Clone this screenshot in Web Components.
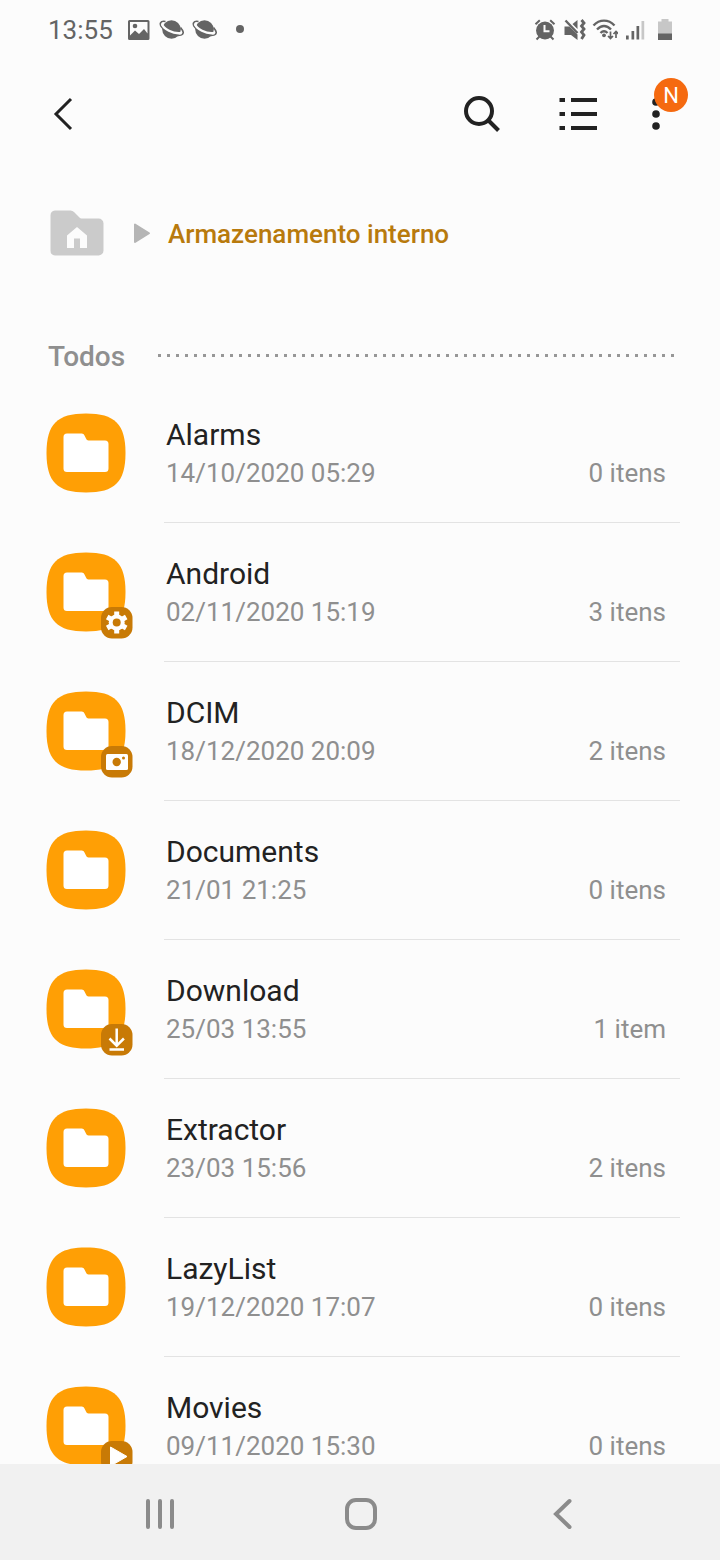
<!DOCTYPE html>
<html lang="pt-BR">
<head>
<meta charset="utf-8">
<meta name="viewport" content="width=device-width, initial-scale=1">
<title>Meus Arquivos</title>
<style>
  html, body { margin: 0; height: 100%; }
  body { background: #fcfcfc; color: #222; font-family: Roboto, "Noto Sans", sans-serif; }
</style>
</head>
<body>
<file-app></file-app>
<script>
const define = (name, html, setup) => {
  const template = document.createElement('template');
  template.innerHTML = html;
  customElements.define(name, class extends HTMLElement {
    connectedCallback() {
      if (this.shadowRoot) return;
      this.attachShadow({ mode: 'open' }).append(template.content.cloneNode(true));
      if (setup) setup(this, this.shadowRoot);
    }
  });
};

define('planet-icon', `
  <style>:host { display: block; } svg { display: block; fill: currentColor; }</style>
  <svg width="25" height="26" viewBox="0 0 25 26"><circle cx="12.500" cy="12.500" r="9.300"/><path d="M6.500 4.500C1 3.500 0 7 3 10.500c4.500 5.500 13.500 9 19 7.500 3.500-1 2.500-4-.5-7.500" fill="none" stroke="currentColor" stroke-width="1.600"/><path d="M3 7c1 4.500 11 10.500 19.500 9" fill="none" stroke="#fcfcfc" stroke-width="2.400"/></svg>
`);

define('status-bar', `
  <style>
    :host { display: flex; justify-content: space-between; align-items: center; height: 60px; padding: 0 42px 0 48px; color: #646464; flex: none; }
    .left, .right { display: flex; align-items: center; }
    .left { gap: 8px; }
    .right { gap: 4px; }
    time { font-size: 26px; line-height: 32px; margin-right: 5px; }
    svg { display: block; fill: currentColor; }
  </style>
  <div class="left">
    <time>13:55</time>
    <svg width="25" height="26" viewBox="0 0 25 26"><path fill-rule="evenodd" d="M3.500 3h18.500a1.500 1.500 0 0 1 1.500 1.500v17a1.500 1.500 0 0 1-1.500 1.500h-18.500a1.500 1.500 0 0 1-1.500-1.500v-17a1.500 1.500 0 0 1 1.500-1.500zM4 5v13.500l5-5 4 3.500 5-5 3.500 4.500v-11.500z"/><circle cx="9" cy="9" r="2.300"/></svg>
    <planet-icon></planet-icon>
    <planet-icon></planet-icon>
    <svg width="25" height="26" viewBox="0 0 25 26"><circle cx="15" cy="12" r="4"/></svg>
  </div>
  <div class="right">
    <svg width="26" height="26" viewBox="0 0 26 26"><circle cx="13" cy="13.500" r="9"/><path d="M3.500 7.200l4.300-4M22.500 7.200l-4.300-4M7.500 19.500l-3 3M18.500 19.500l3 3" stroke="currentColor" stroke-width="2"/><path d="M12.500 8v6.300h5" fill="none" stroke="#fcfcfc" stroke-width="2"/></svg>
    <svg width="26" height="26" viewBox="0 0 26 26"><path d="M2.500 9.500h5l8 8v5.500l-6.500-5h-6.500zM10.500 7l5-4v9z"/><path d="M3.500 3.500l12 12.500" stroke="currentColor" stroke-width="2.400"/><path d="M19.500 3l2.500 3-2.500 3 2.500 3-2.500 3 2.500 3-2.500 4" fill="none" stroke="currentColor" stroke-width="2.800"/></svg>
    <svg width="26" height="26" viewBox="0 0 26 26"><g fill="none" stroke="currentColor" stroke-width="2.400"><path d="M1.500 8.500c6-6.500 15-6.500 21 0M5 12.500c4.500-4.700 9.500-4.700 14 0M8.500 16c2.500-2.500 4.500-2.500 7 0"/><path d="M18.500 14.500v7M16 19l2.500 2.500 2.500-2.500M24 21v-6.500M21.500 17l2.500-2.500 2.500 2.500" stroke-width="1.700"/></g><circle cx="12" cy="18.300" r="1.900"/></svg>
    <svg width="26" height="26" viewBox="0 0 26 26"><path d="M4 18.500h2.700v4h-2.700zM9.500 14h2.700v8.500h-2.700zM14.500 9h2.700v13.500h-2.700z"/><path d="M19.500 4h2.700v18.500h-2.700z" opacity=".35"/></svg>
    <svg width="26" height="26" viewBox="0 0 26 26"><path d="M9.500 2h7v2.500h3.500v12.500h-14v-12.500h3.500z" opacity=".35"/><path d="M6 16.500h14v6.500h-14z"/></svg>
  </div>
`);

define('app-toolbar', `
  <style>
    :host { display: flex; align-items: center; height: 108px; padding: 0 34px 0 33px; color: #222; flex: none; }
    button { display: grid; place-items: center; position: relative; width: 96px; height: 60px; padding: 0; border: 0; background: none; color: inherit; font: inherit; }
    .back { width: 60px; margin-right: auto; }
    .more { width: 60px; }
    .badge { position: absolute; right: -2px; top: -6px; width: 34px; height: 34px; border-radius: 50%; background: #f56a10; color: #fff; font-size: 22px; line-height: 36px; text-align: center; }
    svg { display: block; fill: none; stroke: currentColor; }
  </style>
  <button class="back" aria-label="Voltar"><svg width="40" height="40" viewBox="0 0 40 40" stroke-width="3"><path d="M28 5L13 20l15 15"/></svg></button>
  <button aria-label="Pesquisar"><svg width="40" height="40" viewBox="0 0 40 40" stroke-width="4"><circle cx="17" cy="17" r="13"/><path d="M26.500 26.500l10 10"/></svg></button>
  <button aria-label="Exibir em lista"><svg width="40" height="40" viewBox="0 0 40 40" stroke-width="4"><path d="M1.500 6h5.500M13 6h26M1.500 20h5.500M13 20h26M1.500 34h5.500M13 34h26"/></svg></button>
  <button class="more" aria-label="Mais opções"><svg width="40" height="40" viewBox="0 0 40 40" style="fill:currentColor;stroke:none"><circle cx="20" cy="8" r="3.800"/><circle cx="20" cy="20" r="3.800"/><circle cx="20" cy="32" r="3.800"/></svg><span class="badge">N</span></button>
`);

define('path-trail', `
  <style>
    :host { display: block; flex: none; padding: 36px 40px 0 50px; }
    nav { display: flex; align-items: center; height: 60px; }
    a { color: #b87a0d; text-decoration: none; font-size: 26px; line-height: 36px; font-weight: 500; }
    svg { display: block; }
    .arrow { margin: 0 16px 0 30px; }
  </style>
  <nav aria-label="Caminho">
    <a href="#inicio" aria-label="Início"><svg width="54" height="48" viewBox="0 0 54 48"><path fill="#cbcbcb" d="M5 .5h15.500a5 5 0 0 1 3.500 1.500l5.500 5.500a3 3 0 0 0 2 1h17a5 5 0 0 1 5 5v27a5 5 0 0 1-5 5h-43.500a5 5 0 0 1-4.500-5v-35a5 5 0 0 1 4.500-5z"/><path fill="#fcfcfc" d="M27 17l10 8.500v12.500h-7v-9.500h-6v9.500h-7v-12.500z"/></svg></a>
    <svg class="arrow" width="18" height="22" viewBox="0 0 18 22"><path fill="#b5b5b5" stroke="#b5b5b5" stroke-width="2" stroke-linejoin="round" d="M1 1.500v17.500l14-8.750z"/></svg>
    <a href="#interno"><slot></slot></a>
  </nav>
`);

define('section-title', `
  <style>
    :host { display: flex; align-items: center; gap: 33px; padding: 75px 45px 9px 48px; }
    h2 { margin: 0; font-size: 28px; line-height: 36px; font-weight: 500; color: #8f8f8f; }
    i { flex: 1; height: 3px; margin-bottom: 4px; background: repeating-linear-gradient(90deg, #979797 0 3px, transparent 3px 9px); }
  </style>
  <h2><slot></slot></h2><i></i>
`);

const squircle = (x, y, s) => {
  const h = s / 2, k = s * 0.135;
  return `M${x + h} ${y}C${x + s - k} ${y} ${x + s} ${y + k} ${x + s} ${y + h}S${x + s - k} ${y + s} ${x + h} ${y + s}S${x} ${y + s - k} ${x} ${y + h}S${x + k} ${y} ${x + h} ${y}z`;
};
const badgeArt = {
  gear: '<g transform="translate(76.700 78.500)"><circle r="8" fill="#fff"/><path d="M0-11v22M-9.500-5.500l19 11M-9.500 5.500l19-11" stroke="#fff" stroke-width="5"/><circle r="4" fill="#c87a06"/></g>',
  camera: '<rect x="66" y="71" width="22" height="16" rx="1.500" fill="#fff"/><circle cx="76.700" cy="79" r="4.200" fill="#c87a06"/><circle cx="83.500" cy="75" r="1.500" fill="#c87a06"/>',
  download: '<path d="M76.700 67.500v17.500M69.500 77.500l7.200 7.200 7.200-7.200M69.500 88.500h14.500" fill="none" stroke="#fff" stroke-width="2.500"/>',
  play: '<path d="M70.500 69l16.500 9.500-16.500 9.500z" fill="#fff" stroke="#fff" stroke-linejoin="round"/>'
};

define('folder-icon', `
  <style>
    :host { display: block; width: 96px; height: 96px; }
    svg { display: block; }
  </style>
  <svg width="96" height="96" viewBox="0 0 96 96">
    <path fill="#ff9f05" d="${squircle(6.5, 8.5, 79)}"/>
    <path fill="#fff" d="M27 28.500h14.500a3 3 0 0 1 3 2l1.500 3a3 3 0 0 0 2.500 2h16.500a3.500 3.500 0 0 1 3.500 3.500v24.500a3.500 3.500 0 0 1-3.500 3.500h-38a3.500 3.500 0 0 1-3.500-3.500v-31.500a3.500 3.500 0 0 1 3.500-3.500z"/>
    <g></g>
  </svg>
`, (host, root) => {
  const kind = host.getAttribute('badge');
  if (kind) root.querySelector('g').innerHTML = `<rect x="61" y="63" width="31.500" height="31.500" rx="11" fill="#c87a06"/>` + badgeArt[kind];
});

define('folder-row', `
  <style>
    :host { display: block; }
    a { display: flex; height: 139px; padding: 0 40px; color: #222; text-decoration: none; }
    folder-icon { margin: 21px 28px 0 0; flex: none; }
    .body { flex: 1; box-sizing: border-box; display: grid; grid-template-columns: 1fr auto; grid-template-rows: 38px 38px; padding: 32px 14px 0 2px; border-bottom: 1px solid #e3e3e3; line-height: 38px; }
    .name { grid-column: 1 / 3; font-size: 30px; }
    .meta { font-size: 26px; color: #8f8f8f; }
  </style>
  <a href="#pasta">
    <folder-icon></folder-icon>
    <div class="body"><span class="name"><slot></slot></span><span class="meta"><slot name="date"></slot></span><span class="meta"><slot name="count"></slot></span></div>
  </a>
`, (host, root) => {
  const kind = host.getAttribute('badge');
  if (kind) {
    const icon = document.createElement('folder-icon');
    icon.setAttribute('badge', kind);
    root.querySelector('folder-icon').replaceWith(icon);
  }
});

define('system-nav', `
  <style>
    :host { display: grid; grid-template-columns: repeat(3, 1fr); height: 96px; padding: 4px 57px 0 59px; box-sizing: border-box; background: #f1f1f1; color: #8b8b8b; flex: none; }
    button { display: grid; place-items: center; padding: 0; border: 0; background: none; color: inherit; }
    svg { display: block; fill: none; stroke: currentColor; stroke-width: 4; }
  </style>
  <button aria-label="Recentes"><svg width="40" height="40" viewBox="0 0 40 40" stroke-linecap="round"><path d="M8 7v26M20 7v26M32 7v26"/></svg></button>
  <button aria-label="Início"><svg width="40" height="40" viewBox="0 0 40 40"><rect x="6" y="6" width="28" height="28" rx="9"/></svg></button>
  <button aria-label="Voltar"><svg width="40" height="40" viewBox="0 0 40 40" stroke-linecap="round"><path d="M27.500 7L14 20l13.500 13"/></svg></button>
`);

define('file-app', `
  <style>
    :host { display: flex; flex-direction: column; height: 100vh; }
    main { flex: 1; min-height: 0; overflow-y: auto; scrollbar-width: none; }
  </style>
  <status-bar></status-bar>
  <app-toolbar></app-toolbar>
  <path-trail>Armazenamento interno</path-trail>
  <main>
    <section-title>Todos</section-title>
    <folder-row>Alarms<span slot="date">14/10/2020 05:29</span><span slot="count">0 itens</span></folder-row>
    <folder-row badge="gear">Android<span slot="date">02/11/2020 15:19</span><span slot="count">3 itens</span></folder-row>
    <folder-row badge="camera">DCIM<span slot="date">18/12/2020 20:09</span><span slot="count">2 itens</span></folder-row>
    <folder-row>Documents<span slot="date">21/01 21:25</span><span slot="count">0 itens</span></folder-row>
    <folder-row badge="download">Download<span slot="date">25/03 13:55</span><span slot="count">1 item</span></folder-row>
    <folder-row>Extractor<span slot="date">23/03 15:56</span><span slot="count">2 itens</span></folder-row>
    <folder-row>LazyList<span slot="date">19/12/2020 17:07</span><span slot="count">0 itens</span></folder-row>
    <folder-row badge="play">Movies<span slot="date">09/11/2020 15:30</span><span slot="count">0 itens</span></folder-row>
  </main>
  <system-nav></system-nav>
`);
</script>
</body>
</html>
